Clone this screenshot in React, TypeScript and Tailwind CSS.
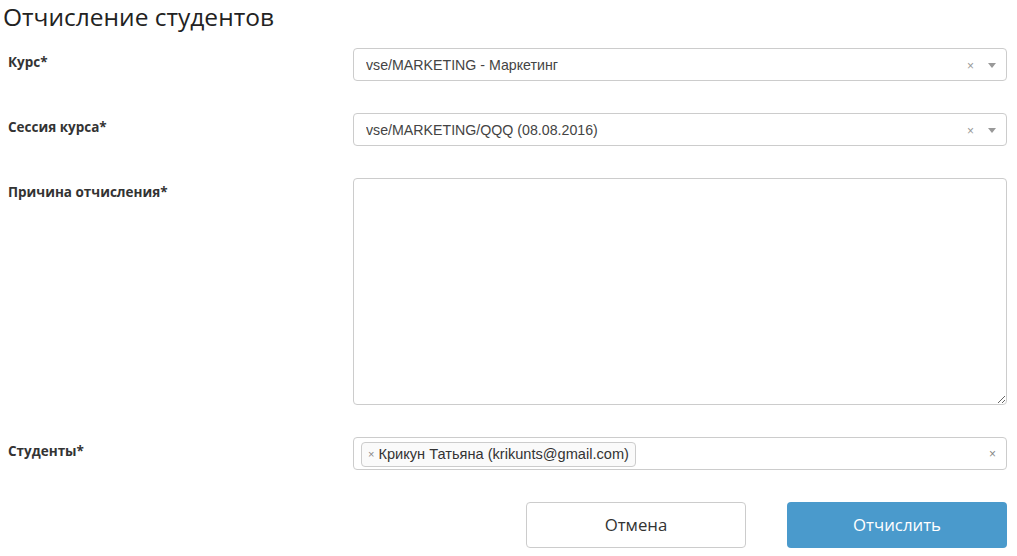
import React from 'react'

const label = 'pt-[5px] text-[13.5px] leading-[18px] font-bold text-[#333]'

function Select({ value }: { value: string }) {
  return (
    <div className="flex h-[33px] items-center rounded border border-[#ccc] bg-white pl-3 pr-2 pt-[2px] font-['Liberation_Sans',Arial,sans-serif] text-[14.2px] text-[#444]">
      <span className="flex-1 truncate">{value}</span>
      <span className="mr-[14px] text-[12px] leading-none text-[#999]">×</span>
      <span className="mr-[2px] h-0 w-0 border-x-[4px] border-t-[5px] border-x-transparent border-t-[#999]" />
    </div>
  )
}

export default function App() {
  return (
    <div className="w-[1017px] bg-white font-['Open_Sans',sans-serif] text-[#333]">
      <h1 className="pl-[3px] text-[24.5px] leading-[34px] font-normal text-[#222]">Отчисление студентов</h1>

      <div className="mt-[14px] flex flex-col gap-[32px] pl-[8px] pr-[10px]">
        <div className="flex">
          <div className={`w-[345px] ${label}`}>Курс*</div>
          <div className="flex-1">
            <Select value="vse/MARKETING - Маркетинг" />
          </div>
        </div>

        <div className="flex">
          <div className={`w-[345px] ${label}`}>Сессия курса*</div>
          <div className="flex-1">
            <Select value="vse/MARKETING/QQQ (08.08.2016)" />
          </div>
        </div>

        <div className="flex">
          <div className={`w-[345px] ${label}`}>Причина отчисления*</div>
          <div className="flex-1">
            <textarea className="block h-[227px] w-full resize-y rounded border border-[#ccc] bg-white outline-none" />
          </div>
        </div>

        <div className="flex">
          <div className={`w-[345px] ${label}`}>Студенты*</div>
          <div className="flex-1">
            <div className="flex h-[33px] items-center rounded border border-[#ccc] bg-white pl-[7px] pr-[10px] pt-[1px] font-['Liberation_Sans',Arial,sans-serif] text-[14.6px]">
              <div className="flex flex-1">
                <span className="flex h-[25px] items-center gap-[4px] rounded border border-[#ccc] bg-[#fafafa] px-[6px] pt-[1px] text-[#333]">
                  <span className="text-[11px] text-[#888]">×</span>
                  Крикун Татьяна (krikunts@gmail.com)
                </span>
              </div>
              <span className="text-[12px] leading-none text-[#888]">×</span>
            </div>
          </div>
        </div>

        <div className="flex justify-end gap-[41px] pr-0">
          <button
            type="button"
            className="h-[46px] w-[220px] rounded border border-[#ccc] bg-white text-[16.8px] text-[#333]"
          >
            Отмена
          </button>
          <button
            type="button"
            className="h-[46px] w-[220px] rounded bg-[#4a9acc] text-[16.8px] text-white"
          >
            Отчислить
          </button>
        </div>
      </div>
    </div>
  )
}
